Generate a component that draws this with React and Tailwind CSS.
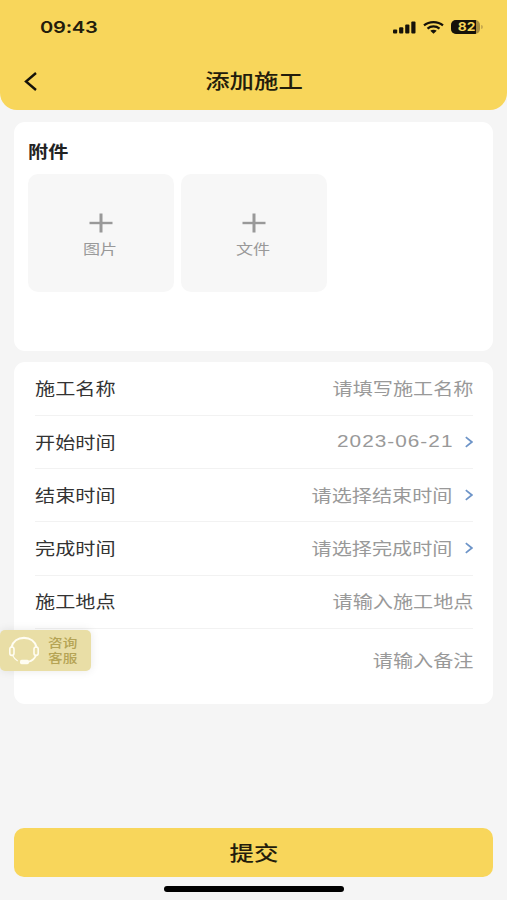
import React from "react";

const fields = [
  { label: "施工名称", value: "请填写施工名称" },
  { label: "开始时间", value: "2023-06-21", picker: true, isDate: true },
  { label: "结束时间", value: "请选择结束时间", picker: true },
  { label: "完成时间", value: "请选择完成时间", picker: true },
  { label: "施工地点", value: "请输入施工地点" },
];

const StatusBar = () => (
  <div className="h-[54px] pl-10 pr-[24px] flex items-center justify-between">
    <span className="mt-px inline-block origin-left scale-x-[1.22] text-[16.5px] leading-none font-semibold tracking-[-0.2px] text-[#231c0c] font-['Inter',sans-serif]">
      09:43
    </span>
    <div className="flex items-center">
      <svg width="23" height="13" viewBox="0 0 23 13" fill="#15120a">
        <rect x="0" y="8.5" width="4.2" height="4" rx="1" />
        <rect x="6.1" y="6.3" width="4.2" height="6.2" rx="1" />
        <rect x="12.2" y="3.6" width="4.2" height="8.9" rx="1" />
        <rect x="18.3" y="0.5" width="4.2" height="12" rx="1" />
      </svg>
      <svg
        className="ml-[7px]"
        width="21"
        height="13"
        viewBox="0 0 21 13"
        fill="none"
        stroke="#15120a"
        strokeWidth="2.2"
      >
        <path d="M1 4.4C6.2 0 14.8 0 20 4.4" />
        <path d="M4.5 7.6C8 4.7 13 4.7 16.5 7.6" />
        <path d="M7.3 9.8C9 8.3 12 8.3 13.7 9.8L10.5 12.7Z" fill="#15120a" stroke="none" />
      </svg>
      <div className="ml-[7px] w-[29px] h-[14px] rounded-[5px] overflow-hidden flex bg-[#a98e3f]">
        <div className="w-[25px] h-full bg-[#15120a] flex items-center justify-end pr-px">
          <span className="inline-block origin-right scale-x-[1.15] text-[12px] leading-none font-bold text-[#f8d75b] font-['Inter',sans-serif]">
            82
          </span>
        </div>
      </div>
      <div className="ml-px w-[2px] h-[4px] rounded-r-full bg-[#c9ab4d]" />
    </div>
  </div>
);

const UploadTile = ({ label }) => (
  <button className="w-[146px] h-[118px] rounded-[10px] bg-[#f7f7f7] flex flex-col items-center pt-[39px]">
    <svg width="24" height="20" viewBox="0 0 24 20" stroke="#999999">
      <path d="M0.5 10H23.5" strokeWidth="2.4" />
      <path d="M12 0.5V19.5" strokeWidth="3" />
    </svg>
    <span className="mt-[8px] mr-[2px] inline-block scale-x-[1.22] text-[14px] leading-none text-[#999999]">
      {label}
    </span>
  </button>
);

const FieldRow = ({ label, value, picker, isDate }) => (
  <div className="h-[53.25px] border-b border-[#f2f2f2] flex items-center justify-between">
    <span className="inline-block origin-left scale-x-[1.22] text-[16.5px] leading-none text-[#333333]">
      {label}
    </span>
    <div className="flex items-center">
      {isDate ? (
        <span className="-mr-px inline-block origin-right scale-x-[1.22] text-[17px] leading-none tracking-[0.85px] text-[#999999] font-['Liberation_Sans',sans-serif]">
          {value}
        </span>
      ) : (
        <span className="inline-block origin-right scale-x-[1.22] text-[16.5px] leading-none text-[#999999]">
          {value}
        </span>
      )}
      {picker && (
        <svg
          className="ml-[13px]"
          width="8"
          height="12"
          viewBox="0 0 8 12"
          fill="none"
          stroke="#6d94c8"
          strokeWidth="1.7"
        >
          <path d="M0.8 1.2L6.8 6L0.8 10.8" />
        </svg>
      )}
    </div>
  </div>
);

const SupportBadge = () => (
  <div className="absolute left-0 top-[630px] w-[91px] h-[41px] pl-2 rounded-[5px] bg-[#e9dea6] shadow-[0_0_10px_rgba(0,0,0,0.09)] flex items-center">
    <svg
      width="32"
      height="29"
      viewBox="0 0 32 29"
      fill="none"
      stroke="#fffdf2"
      strokeLinecap="round"
    >
      <path d="M3.6 11C5 5.3 9.8 1.9 16 1.9S27 5.3 28.4 11" strokeWidth="2.1" />
      <rect x="1.8" y="11" width="4.2" height="8.4" rx="2.1" strokeWidth="1.6" />
      <rect x="26" y="11" width="4.2" height="8.4" rx="2.1" strokeWidth="1.6" />
      <path d="M27.8 19.6C26.6 22.6 24 24.8 20.5 25.8" strokeWidth="1.7" />
      <path d="M4.8 19.8C5.8 21.9 7.3 23.5 9.4 24.7" strokeWidth="1.1" />
      <rect x="12" y="23.7" width="9" height="4.5" rx="1.6" fill="#fffdf2" stroke="none" />
    </svg>
    <p className="ml-2 mb-[2px] w-6 origin-left scale-x-[1.22] text-[12px] leading-[15px] font-medium text-[#b5a455]">
      咨询客服
    </p>
  </div>
);

const App = () => {
  return (
    <div className="relative w-full h-[900px] overflow-hidden bg-[#f5f5f5] flex flex-col font-['Noto_Sans_CJK_SC',sans-serif]">
      <header className="h-[110px] shrink-0 rounded-b-[17px] bg-[#f8d65b] text-[#231c0c]">
        <StatusBar />
        <div className="h-[54px] px-6 grid grid-cols-[1fr_auto_1fr] items-center">
          <svg
            width="14"
            height="19"
            viewBox="0 0 14 19"
            fill="none"
            stroke="#15120a"
            strokeWidth="2.4"
          >
            <path d="M12 1L2 9.5L12 18" />
          </svg>
          <h1 className="scale-x-[1.22] text-[20px] leading-none font-medium">添加施工</h1>
        </div>
      </header>

      <section className="mx-[14px] mt-3 h-[229px] shrink-0 rounded-[11px] bg-white px-[14px] pt-[21px]">
        <h2 className="w-fit origin-left scale-x-[1.22] text-[16.5px] leading-none font-bold text-[#222222]">
          附件
        </h2>
        <div className="mt-[14px] flex gap-[7px]">
          <UploadTile label="图片" />
          <UploadTile label="文件" />
        </div>
      </section>

      <section className="mx-[14px] mt-[11px] h-[342px] shrink-0 rounded-[11px] bg-white pt-[0.5px] pl-[21px] pr-5">
        {fields.map((field) => (
          <FieldRow key={field.label} {...field} />
        ))}
        <div className="h-[63px] flex items-center justify-end">
          <span className="inline-block origin-right scale-x-[1.22] text-[16.5px] leading-none text-[#999999]">
            请输入备注
          </span>
        </div>
      </section>

      <footer className="mt-auto px-[14px] pb-2 flex flex-col items-center">
        <button className="w-full h-[49px] rounded-[10px] bg-[#f8d65b] text-[#231c0c] flex items-center justify-center">
          <span className="inline-block scale-x-[1.22] text-[20px] leading-none font-medium">
            提交
          </span>
        </button>
        <div className="mt-[9px] ml-px w-[180px] h-[6px] rounded-full bg-black" />
      </footer>

      <SupportBadge />
    </div>
  );
};

export default App;
